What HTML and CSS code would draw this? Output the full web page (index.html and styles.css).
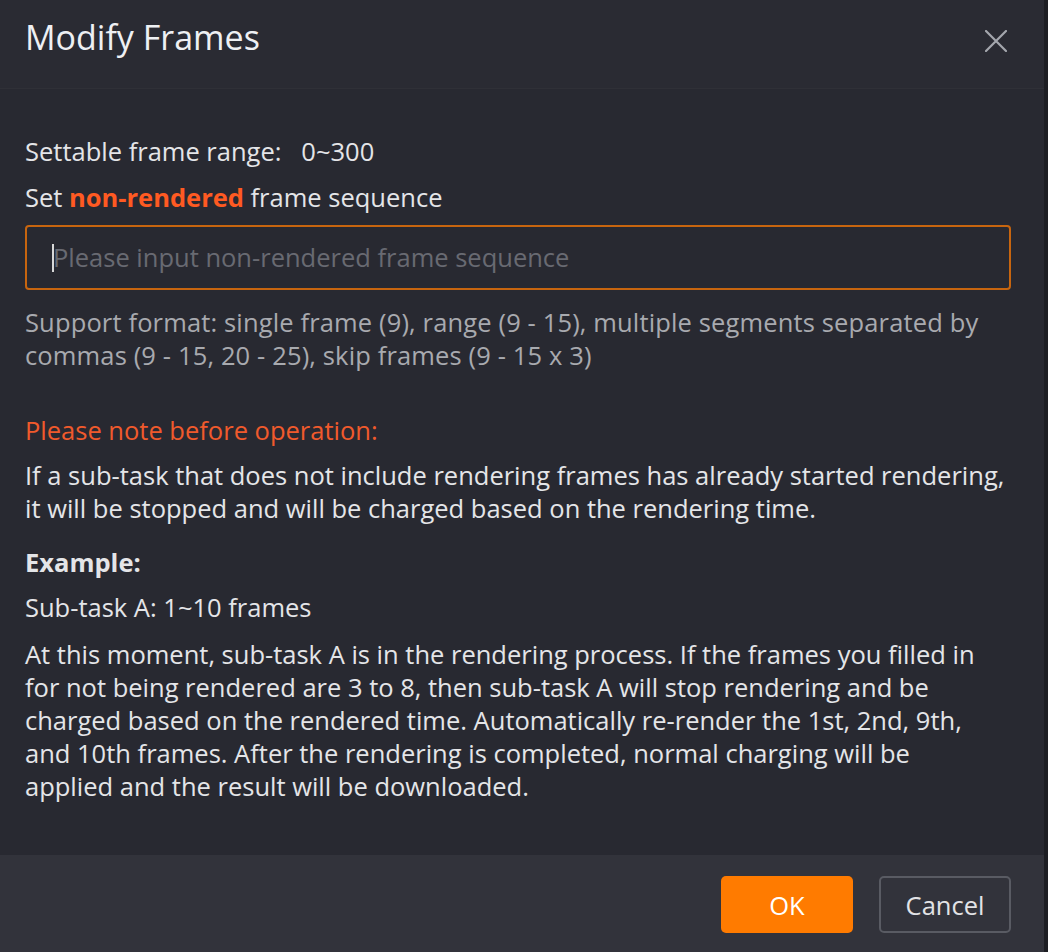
FILE: index.html
```html
<!DOCTYPE html>
<html lang="en">
<head>
<meta charset="utf-8">
<title>Modify Frames</title>
<link rel="stylesheet" href="styles.css">
</head>
<body>
<div class="dialog">
  <div class="header">
    <h1 class="title">Modify Frames</h1>
    <button class="close" aria-label="Close">
      <svg width="22" height="22" viewBox="0 0 22 22"><path d="M1 1 L21 21 M21 1 L1 21" stroke="#a4a7ae" stroke-width="2.2" stroke-linecap="round" fill="none"/></svg>
    </button>
  </div>
  <div class="body">
    <p class="line range">Settable frame range:&nbsp;&nbsp; 0~300</p>
    <p class="line setlabel">Set <strong class="accent">non-rendered</strong> frame sequence</p>
    <div class="input"><span class="caret"></span><span class="placeholder">Please input non-rendered frame sequence</span></div>
    <p class="hint">Support format: single frame (9), range (9 - 15), multiple segments separated by commas (9 - 15, 20 - 25), skip frames (9 - 15 x 3)</p>
    <p class="note">Please note before operation:</p>
    <p class="para">If a sub-task that does not include rendering frames has already started rendering, it will be stopped and will be charged based on the rendering time.</p>
    <p class="para example">Example:</p>
    <p class="para subtask">Sub-task A: 1~10 frames</p>
    <p class="para detail">At this moment, sub-task A is in the rendering process. If the frames you filled in for not being rendered are 3 to 8, then sub-task A will stop rendering and be charged based on the rendered time. Automatically re-render the 1st, 2nd, 9th, and 10th frames. After the rendering is completed, normal charging will be applied and the result will be downloaded.</p>
  </div>
  <div class="footer">
    <button class="btn btn-ok">OK</button>
    <button class="btn btn-cancel">Cancel</button>
  </div>
</div>
</body>
</html>
```
FILE: styles.css
```css
* { box-sizing: border-box; }
html, body { margin: 0; padding: 0; }
body {
  background: #1d1e23;
  font-family: "Open Sans", "Noto Sans", sans-serif;
  width: 1048px;
  height: 952px;
  overflow: hidden;
}
.dialog {
  width: 1044px;
  height: 952px;
  background: #282931;
  display: flex;
  flex-direction: column;
}
.header {
  height: 89px;
  background: #2a2b33;
  border-bottom: 1px solid #2f3037;
  display: flex;
  align-items: flex-start;
  justify-content: space-between;
  padding: 0 37px 0 25px;
}
.title {
  margin: 0;
  margin-top: 14px;
  font-weight: 400;
  font-size: 34px;
  line-height: 46px;
  color: #eef0f3;
}
.close {
  margin-top: 30px;
  background: none;
  border: 0;
  padding: 0;
  width: 22px;
  height: 22px;
  display: block;
}
.body {
  flex: 1;
  padding: 46px 33px 0 25px;
  color: #e4e5e8;
  font-size: 25.5px;
  line-height: 33px;
}
.body p { margin: 0; }
.setlabel { margin-top: 13px !important; }
.accent { color: #ff5a22; font-weight: 700; }
.input {
  margin-top: 11px;
  width: 986px;
  height: 65px;
  border: 2px solid #c7650f;
  border-radius: 4px;
  display: flex;
  align-items: center;
  padding-left: 25px;
}
.caret {
  width: 2px;
  height: 28px;
  background: #d8d8d8;
  margin-right: -1px;
}
.placeholder { color: #686a72; }
.hint { margin-top: 16px !important; color: #a8aaaf; letter-spacing: 0.14px; }
.note { margin-top: 42px !important; color: #f05a2c; }
.para { margin-top: 12px !important; }
.example { margin-top: 21px !important; font-weight: 700; }
.detail { margin-top: 14px !important; max-width: 970px; }
.footer {
  height: 97px;
  background: #32333b;
  display: flex;
  justify-content: flex-end;
  align-items: flex-start;
  gap: 26px;
  padding: 21px 33px 0 0;
}
.btn {
  width: 132px;
  height: 57px;
  border-radius: 5px;
  font-family: inherit;
  font-size: 25.5px;
  cursor: pointer;
}
.btn-ok { background: #ff7b00; border: 0; color: #fff; }
.btn-cancel { background: transparent; border: 2px solid #595b63; color: #e2e3e6; }
```
